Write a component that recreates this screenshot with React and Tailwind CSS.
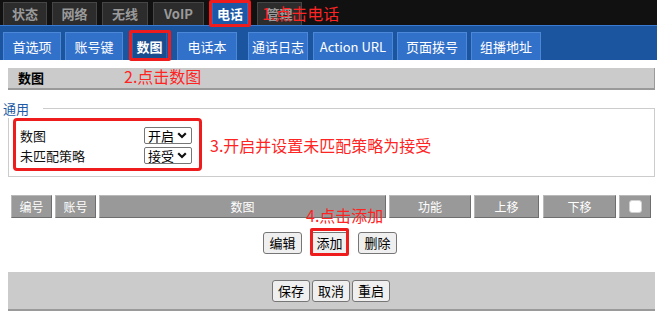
import { Fragment } from 'react'

const topTabs = [
  { label: '状态', cls: 'ml-[3px] w-[44px]' },
  { label: '网络', cls: 'ml-[5px] w-[45px]' },
  { label: '无线', cls: 'ml-[5px] w-[46px]' },
  { label: 'VoIP', cls: 'ml-[5px] w-[51px]' },
  { label: '电话', cls: 'ml-[8px] w-[36px]', active: true },
  { label: '管理', cls: 'ml-[9px] w-[45px]' },
]

const subTabs = [
  { label: '首选项', cls: 'ml-[3px] w-[58px]' },
  { label: '账号键', cls: 'ml-[4px] w-[58px]' },
  { label: '数图', cls: 'ml-[9px] w-[35px]', active: true },
  { label: '电话本', cls: 'ml-[10px] w-[60px]' },
  { label: '通话日志', cls: 'ml-[11px] w-[60px]' },
  { label: 'Action URL', cls: 'ml-[5px] w-[80px]' },
  { label: '页面拨号', cls: 'ml-[4px] w-[70px]' },
  { label: '组播地址', cls: 'ml-[4px] w-[70px]' },
]

const cols = [
  { label: '编号', cls: 'ml-[11px] w-[41px]' },
  { label: '账号', cls: 'ml-[3px] w-[41px]' },
  { label: '数图', cls: 'ml-[3px] w-[287px]' },
  { label: '功能', cls: 'ml-[3px] w-[82px]' },
  { label: '上移', cls: 'ml-[3px] w-[65px]' },
  { label: '下移', cls: 'ml-[4px] w-[73px]' },
]

function Chevron() {
  return (
    <svg width="10" height="7" viewBox="0 0 10 7" className="ml-[3px]">
      <path d="M1.2 1.3 L5 5 L8.8 1.3" fill="none" stroke="#111" strokeWidth="2.2" />
    </svg>
  )
}

function Select({ value }) {
  return (
    <div className="w-[48px] h-[17px] border border-[#767676] rounded-[2px] bg-white flex items-center pl-[3px] text-[13px] leading-none text-black">
      <span>{value}</span>
      <Chevron />
    </div>
  )
}

function Btn({ children, cls }) {
  return (
    <div className={`h-[22px] border border-[#767676] rounded-[3px] bg-[#efefef] flex items-center justify-center text-[13px] text-black ${cls}`}>
      {children}
    </div>
  )
}

export default function App() {
  return (
    <div className="relative w-[657px] h-[315px] overflow-hidden bg-white font-['Microsoft_YaHei','Noto_Sans_CJK_SC',sans-serif]">
      {/* top menu */}
      <div className="h-[25px] bg-[#111111] flex items-end">
        {topTabs.map(t => (
          <div key={t.label}
               className={`h-[23px] flex items-center justify-center text-[13px] font-bold border border-b-0 ${t.cls} ${t.active ? 'bg-[#1c58a6] border-[#2a6bc0] text-white' : 'bg-[#2c2c2c] border-[#464646] text-[#9a9a9a]'}`}>
            {t.label}
          </div>
        ))}
      </div>
      <div className="h-[1px] bg-[#3a7ad2]" />
      {/* sub menu */}
      <div className="h-[34px] bg-[#1b55a0] flex items-end">
        {subTabs.map(t => (
          <div key={t.label}
               className={`h-[28px] flex items-center justify-center text-[13px] border border-b-0 ${t.cls} ${t.active ? 'bg-[#194d90] border-[#2a62ad] text-white font-bold' : 'bg-[#3271c9] border-[#4d88d8] text-white'}`}>
            {t.label}
          </div>
        ))}
      </div>

      {/* section header */}
      <div className="mt-[8px] ml-[8px] w-[647px] h-[22px] bg-[#cbcbcb] border-b-2 border-r border-[#9a9a9a] flex items-center pl-[10px] text-[13px] font-bold text-black">
        数图
      </div>

      {/* fieldset */}
      <div className="relative mt-[18px] ml-[8px] w-[647px] border border-[#cccccc] pt-[9px] pb-[5px] pl-[4px] flex items-center">
        <div className="absolute left-[-9px] top-[-9px] w-[43px] h-[18px] bg-white pl-[3px] text-[13px] leading-[18px] text-[#1f5aa6]">
          通用
        </div>
        <div className="w-[189px] h-[53px] border-[3px] border-[#ee1c1c] rounded-[4px] pt-[6px] pl-[4px] flex flex-col gap-[3px]">
          {[['数图', '开启'], ['未匹配策略', '接受']].map(([l, v]) => (
            <div key={l} className="flex items-center h-[17px]">
              <span className="w-[124px] text-[13px] text-[#111]">{l}</span>
              <Select value={v} />
            </div>
          ))}
        </div>
        <span className="ml-[8px] text-[16px] text-[#ff2424]">3.开启并设置未匹配策略为接受</span>
      </div>

      {/* table header */}
      <div className="mt-[18px] flex h-[23px]">
        {cols.map(c => (
          <div key={c.label}
               className={`h-[23px] bg-[#999999] border border-[#b9b9b9] border-r-[#6e6e6e] border-b-[#6e6e6e] flex items-center justify-center text-[12px] text-white ${c.cls}`}>
            {c.label}
          </div>
        ))}
        <div className="ml-[3px] w-[32px] h-[23px] bg-[#999999] border border-[#b9b9b9] border-r-[#6e6e6e] border-b-[#6e6e6e] flex items-center justify-center">
          <div className="w-[13px] h-[13px] bg-white rounded-[3px] border border-[#d0d0d0]" />
        </div>
      </div>

      {/* edit buttons */}
      <div className="mt-[14px] flex pl-[263px]">
        <Btn cls="w-[39px]">编辑</Btn>
        <Btn cls="ml-[8px] w-[39px]">添加</Btn>
        <Btn cls="ml-[9px] w-[39px]">删除</Btn>
      </div>

      {/* bottom bar */}
      <div className="mt-[18px] ml-[8px] w-[647px] h-[39px] bg-[#cbcbcb] border-b-2 border-[#9a9a9a] flex items-center pl-[264px] pt-[1px]">
        <Btn cls="w-[38px]">保存</Btn>
        <Btn cls="ml-[2px] w-[38px]">取消</Btn>
        <Btn cls="ml-[2px] w-[38px]">重启</Btn>
      </div>

      {/* annotations */}
      <div className="absolute left-[209px] top-[0px] w-[42px] h-[27px] border-[3px] border-[#ee1c1c] rounded-[2px]" />
      <span className="absolute left-[262px] top-[3px] text-[16px] leading-[20px] text-[#ff2424]">1.点击电话</span>
      <div className="absolute left-[129px] top-[30px] w-[42px] h-[31px] border-[3px] border-[#ee1c1c] rounded-[2px]" />
      <span className="absolute left-[124px] top-[66px] text-[16px] leading-[20px] text-[#ff2424]">2.点击数图</span>
      <span className="absolute left-[306px] top-[205px] text-[16px] leading-[20px] text-[#ff2424]">4.点击添加</span>
      <div className="absolute left-[310px] top-[228px] w-[39px] h-[28px] border-[3px] border-[#ee1c1c] rounded-[2px]" />
    </div>
  )
}
